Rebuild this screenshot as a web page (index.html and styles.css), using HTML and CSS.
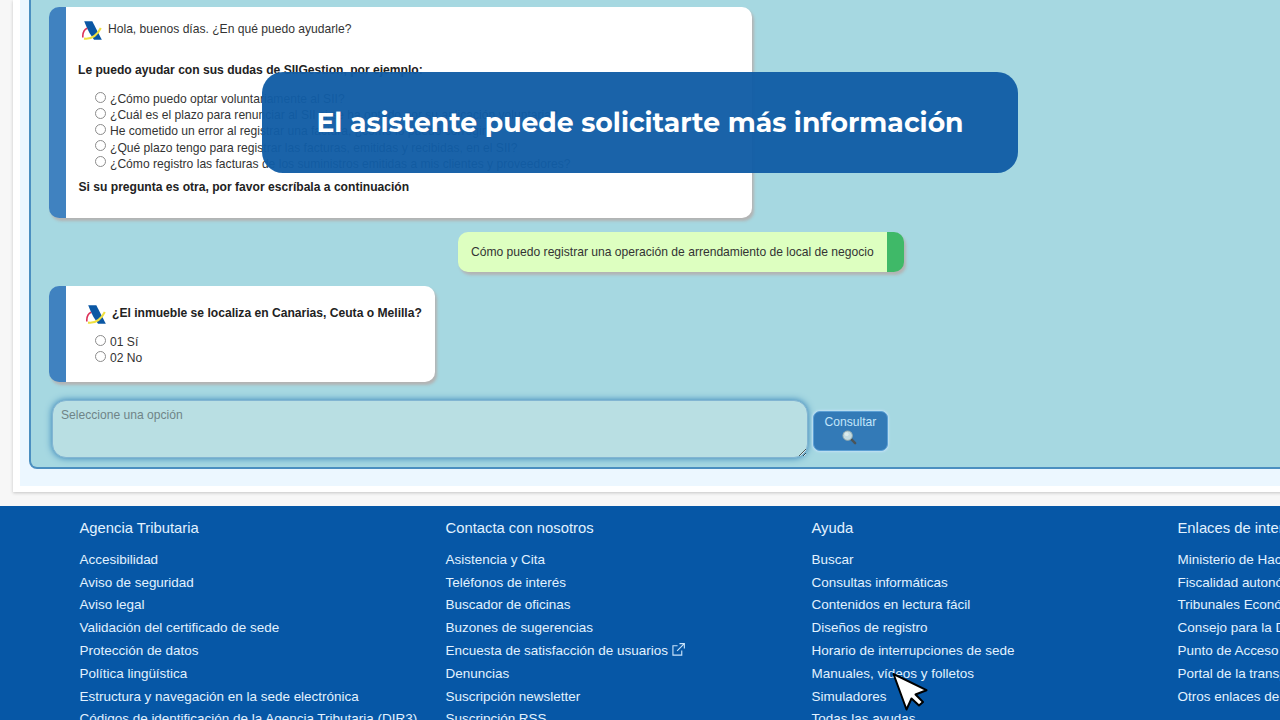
FILE: index.html
```html
<!DOCTYPE html>
<html lang="es">
  <head>
    <meta charset="utf-8" />
    <meta name="viewport" content="width=device-width, initial-scale=1" />
    <title>Asistente virtual - Agencia Tributaria</title>
    <link rel="stylesheet" href="styles.css" />
  </head>
  <body>
    <svg class="defs" width="0" height="0">
      <symbol id="logo" viewBox="0 0 20 19">
        <path d="M2.200 .3H10.300L19.800 18.700H12L7.500 12L5.200 7.500z" fill="#0b57a4" />
        <path d="M.8 16.500C.6 12 2 8.500 5.200 7.200" fill="none" stroke="#dc3158" stroke-width="1.600" />
        <path d="M2 17.600C9 18.500 15 14.500 18.800 7" fill="none" stroke="#f0e040" stroke-width="2.100" />
      </symbol>
    </svg>

    <main class="page">
      <div class="panel">
        <div class="chat">
          <div class="message bot welcome">
            <p class="greeting">
              <svg class="logo"><use href="#logo" /></svg>
              <span>Hola, buenos días. ¿En qué puedo ayudarle?</span>
            </p>
            <p class="intro">Le puedo ayudar con sus dudas de SIIGestion, por ejemplo:</p>
            <div class="options">
              <label><input type="radio" name="faq" />¿Cómo puedo optar voluntariamente al SII?</label>
              <label><input type="radio" name="faq" />¿Cuál es el plazo para renunciar al SII si se ha optado por su aplicación voluntaria?</label>
              <label><input type="radio" name="faq" />He cometido un error al registrar una factura, ¿cómo lo puedo corregir?</label>
              <label><input type="radio" name="faq" />¿Qué plazo tengo para registrar las facturas, emitidas y recibidas, en el SII?</label>
              <label><input type="radio" name="faq" />¿Cómo registro las facturas de los suministros emitidas a mis clientes y proveedores?</label>
            </div>
            <p class="other">Si su pregunta es otra, por favor escríbala a continuación</p>
          </div>

          <div class="message user">Cómo puedo registrar una operación de arrendamiento de local de negocio</div>

          <div class="message bot question">
            <p class="greeting">
              <svg class="logo"><use href="#logo" /></svg>
              <b>¿El inmueble se localiza en Canarias, Ceuta o Melilla?</b>
            </p>
            <div class="options">
              <label><input type="radio" name="place" />01 Sí</label>
              <label><input type="radio" name="place" />02 No</label>
            </div>
          </div>

          <div class="ask">
            <textarea placeholder="Seleccione una opción"></textarea>
            <button>
              Consultar
              <svg class="lens" viewBox="0 0 16 16">
                <path d="M9 9l5 5" stroke="#4b5458" stroke-width="2.600" stroke-linecap="round" />
                <circle cx="6" cy="6" r="5" fill="#c3dce2" stroke="#9fb0ae" />
                <circle cx="5" cy="4.500" r="2" fill="#dceced" />
              </svg>
            </button>
          </div>
        </div>
      </div>
    </main>

    <footer>
      <div class="column">
        <h2>Agencia Tributaria</h2>
        <ul>
          <li>Accesibilidad</li>
          <li>Aviso de seguridad</li>
          <li>Aviso legal</li>
          <li>Validación del certificado de sede</li>
          <li>Protección de datos</li>
          <li>Política lingüística</li>
          <li>Estructura y navegación en la sede electrónica</li>
          <li>Códigos de identificación de la Agencia Tributaria (DIR3)</li>
        </ul>
      </div>
      <div class="column">
        <h2>Contacta con nosotros</h2>
        <ul>
          <li>Asistencia y Cita</li>
          <li>Teléfonos de interés</li>
          <li>Buscador de oficinas</li>
          <li>Buzones de sugerencias</li>
          <li>
            Encuesta de satisfacción de usuarios
            <svg class="external" viewBox="0 0 14 14">
              <path d="M6 3H1v10h9.500V8M8 .7h5.300V6M13 1L5.500 8.500" fill="none" stroke="#c9e4fb" stroke-width="1.200" />
            </svg>
          </li>
          <li>Denuncias</li>
          <li>Suscripción newsletter</li>
          <li>Suscripción RSS</li>
        </ul>
      </div>
      <div class="column">
        <h2>Ayuda</h2>
        <ul>
          <li>Buscar</li>
          <li>Consultas informáticas</li>
          <li>Contenidos en lectura fácil</li>
          <li>Diseños de registro</li>
          <li>Horario de interrupciones de sede</li>
          <li>Manuales, vídeos y folletos</li>
          <li>Simuladores</li>
          <li>Todas las ayudas</li>
        </ul>
      </div>
      <div class="column">
        <h2>Enlaces de interés</h2>
        <ul>
          <li>Ministerio de Hacienda</li>
          <li>Fiscalidad autonómica</li>
          <li>Tribunales Económicos</li>
          <li>Consejo para la Defensa</li>
          <li>Punto de Acceso General</li>
          <li>Portal de la transparencia</li>
          <li>Otros enlaces de interés</li>
        </ul>
      </div>
    </footer>

    <div class="caption">El asistente puede solicitarte más información</div>

    <svg class="cursor" viewBox="0 0 40 42">
      <path d="M3.500 4L36.500 20.200L25.500 24.500L33 32L29 35.500L21.500 28.500L16.500 39.500Z" fill="#fff" stroke="#000" stroke-width="2" stroke-linejoin="round" />
    </svg>
  </body>
</html>
```

FILE: styles.css
```css
* {
  box-sizing: border-box;
}

body {
  position: relative;
  height: 720px;
  margin: 0;
  overflow: hidden;
  background-color: #f7f7f7;
  font-family: "Liberation Sans", Arial, sans-serif;
  font-size: 12.1px;
  color: #333;
}

p,
h2,
ul {
  margin: 0;
  padding: 0;
}

.defs {
  position: absolute;
}

/* chat */
.page {
  width: 1400px;
  height: 492px;
  margin-left: 13px;
  padding: 0 7px 6px;
  background-color: #fff;
  box-shadow: 0 1px 3px #c4c4c4;
}

.panel {
  height: 486px;
  padding: 0 9px;
  background-color: #ecf7ff;
}

.chat {
  display: flex;
  flex-direction: column;
  align-items: flex-start;
  height: 469px;
  padding: 7px 18px 0;
  border: 2px solid #4b8fc0;
  border-top: 0;
  border-radius: 0 0 8px 8px;
  background-color: #a6d8e1;
}

.message {
  border-radius: 10px;
  box-shadow: 2px 3px 3px #b3b3b3;
  white-space: nowrap;
}

.bot {
  border-left: 17px solid #4082c0;
  background-color: #fff;
}

.welcome {
  width: 703px;
  height: 211px;
  padding: 12px 12px 0;
}

.greeting {
  display: flex;
  align-items: center;
  gap: 6px;
  height: 20px;
}

.welcome .greeting {
  padding-left: 4px;
}

.logo {
  width: 20px;
  height: 19px;
  margin-top: 2px;
}

.intro,
.other {
  font-weight: bold;
  color: #222;
  line-height: 16px;
}

.intro {
  margin-top: 23px;
}

.options {
  display: flex;
  flex-direction: column;
  margin-top: 13px;
  padding-left: 17px;
}

.options label {
  display: flex;
  gap: 4px;
  height: 16.2px;
  line-height: 16px;
}

.options input {
  appearance: none;
  width: 11px;
  height: 11px;
  margin: 0.5px 0 0;
  border: 1px solid #8c8c8c;
  border-radius: 50%;
}

.other {
  margin-top: 7px;
  padding-left: 0.5px;
}

.user {
  width: 446px;
  height: 40px;
  margin: 14px 0 14px 409px;
  padding-left: 13px;
  border-right: 17px solid #3fb968;
  background-color: #ddffc0;
  line-height: 40px;
}

.question {
  width: 386px;
  height: 96px;
  padding: 17px 12px 0;
}

.question .greeting {
  padding-left: 8px;
}

.question b {
  color: #222;
}

.question .options {
  margin-top: 11px;
}

.ask {
  display: flex;
  align-items: center;
  gap: 5px;
  margin: 18px 0 0 3px;
}

.ask textarea {
  width: 756px;
  height: 58px;
  padding: 7px 8px;
  border: 1px solid #82b5d2;
  border-radius: 14px;
  background-color: #b9dfe3;
  box-shadow: 0 0 7px #2e7cb5;
  font: inherit;
}

.ask textarea::placeholder {
  color: #6f8487;
}

.ask button {
  display: flex;
  flex-direction: column;
  align-items: center;
  width: 75px;
  height: 40px;
  margin-top: 3px;
  padding: 3px 0 0;
  border: 1px solid #5b9fd4;
  border-radius: 7px;
  background-color: #337ab7;
  box-shadow: 0 0 2px 1px #bfe0f5;
  font: inherit;
  line-height: 14px;
  color: #c3e6fa;
}

.lens {
  width: 15px;
  height: 15px;
  margin: 1px 2px 0 0;
}

/* footer */
footer {
  display: grid;
  grid-template-columns: repeat(4, 366px);
  width: 1464px;
  height: 214px;
  margin-top: 14px;
  padding: 12px 0 0 79.5px;
  background-color: #0657a6;
  color: #e2f2ff;
  white-space: nowrap;
  overflow: hidden;
}

footer h2 {
  margin-bottom: 10.8px;
  font-size: 14.8px;
  font-weight: normal;
  line-height: 20px;
}

footer ul {
  list-style: none;
}

footer li {
  height: 22.8px;
  font-size: 13.48px;
  line-height: 22.8px;
}

.external {
  width: 13px;
  height: 13px;
  vertical-align: -1px;
}

/* video caption and pointer */
.caption {
  position: absolute;
  top: 72px;
  left: 262px;
  width: 756px;
  height: 101px;
  border-radius: 21px;
  background-color: rgba(17, 93, 165, 0.96);
  font-family: Montserrat, Inter, sans-serif;
  font-size: 26.7px;
  font-weight: 700;
  line-height: 101px;
  text-align: center;
  white-space: nowrap;
  color: #fff;
}

.cursor {
  position: absolute;
  top: 670px;
  left: 890px;
  width: 40px;
  height: 42px;
}
```
